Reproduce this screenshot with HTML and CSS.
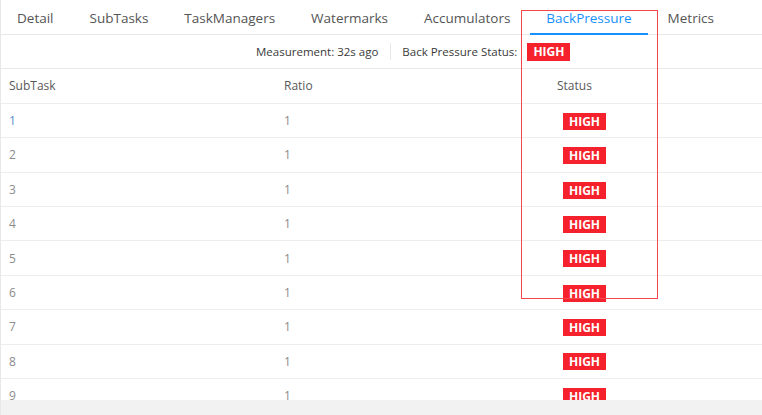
FILE: index.html
```html
<!DOCTYPE html>
<html>
<head>
<meta charset="utf-8">
<link rel="stylesheet" href="styles.css">
</head>
<body>
<div class="page">
  <div class="tabs">
    <div class="tab">Detail</div>
    <div class="tab">SubTasks</div>
    <div class="tab">TaskManagers</div>
    <div class="tab">Watermarks</div>
    <div class="tab">Accumulators</div>
    <div class="tab active">BackPressure</div>
    <div class="tab">Metrics</div>
  </div>
  <div class="summary">
    <span class="label">Measurement: 32s ago</span>
    <span class="divider"></span>
    <span class="label">Back Pressure Status:</span>
    <span class="badge big">HIGH</span>
  </div>
  <div class="scroll">
    <table class="grid">
      <colgroup><col class="c1"><col class="c2"><col class="c3"></colgroup>
      <thead>
        <tr><th>SubTask</th><th>Ratio</th><th>Status</th></tr>
      </thead>
      <tbody>
        <tr><td class="link">1</td><td>1</td><td><span class="badge">HIGH</span></td></tr>
        <tr><td>2</td><td>1</td><td><span class="badge">HIGH</span></td></tr>
        <tr><td>3</td><td>1</td><td><span class="badge">HIGH</span></td></tr>
        <tr><td>4</td><td>1</td><td><span class="badge">HIGH</span></td></tr>
        <tr><td>5</td><td>1</td><td><span class="badge">HIGH</span></td></tr>
        <tr><td>6</td><td>1</td><td><span class="badge">HIGH</span></td></tr>
        <tr><td>7</td><td>1</td><td><span class="badge">HIGH</span></td></tr>
        <tr><td>8</td><td>1</td><td><span class="badge">HIGH</span></td></tr>
        <tr><td>9</td><td>1</td><td><span class="badge">HIGH</span></td></tr>
      </tbody>
    </table>
  </div>
  <div class="footer"></div>
  <div class="highlight"></div>
</div>
</body>
</html>
```
FILE: styles.css
```css
* { box-sizing: border-box; }
html, body { margin: 0; padding: 0; background: #fff; }
body { font-family: "Open Sans", "Noto Sans", sans-serif; }
.page {
  position: relative;
  width: 762px;
  height: 415px;
  border-left: 1px solid #e8e8e8;
  overflow: hidden;
}
.tabs {
  display: flex;
  height: 35px;
  border-bottom: 1px solid #e8e8e8;
}
.tab {
  padding: 1px 16px 0;
  margin-right: 4px;
  font-size: 13.5px;
  line-height: 34px;
  color: #545454;
  position: relative;
  white-space: nowrap;
}
.tab.active { color: #1890ff; }
.tab.active::after {
  content: "";
  position: absolute;
  left: 0; right: 0; bottom: -1px;
  height: 2px;
  background: #1890ff;
}
.summary {
  display: flex;
  align-items: center;
  height: 34px;
  padding-left: 255px;
  border-bottom: 1px solid #e8e8e8;
  font-size: 11.5px;
  color: #3a3a3a;
}
.divider {
  width: 1px;
  height: 17px;
  background: #e8e8e8;
  margin: 0 11px 0 12px;
}
.summary .badge { margin-left: 10px; }
.scroll {
  height: 331px;
  overflow: hidden;
}
.grid {
  width: 761px;
  border-collapse: collapse;
  table-layout: fixed;
  font-size: 12px;
}
.c1 { width: 275px; }
.c2 { width: 273px; }
.grid th, .grid td {
  height: 34.4px;
  padding: 0 8px;
  text-align: left;
  border-bottom: 1px solid #ededed;
  font-weight: normal;
}
.grid th { color: #595959; }
.grid td { color: #8c8c8c; }
.grid td.link { color: #5b8ec7; }
.grid td .badge { margin-left: 6px; }
.badge {
  display: inline-block;
  background: #f5222d;
  color: #fff;
  font-weight: 700;
  font-size: 12px;
  line-height: 17px;
  height: 17px;
  padding: 0 6px;
  vertical-align: middle;
}
.badge.big { height: 18px; line-height: 18px; }
.footer {
  height: 15px;
  background: #f2f2f2;
}
.highlight {
  position: absolute;
  left: 520px;
  top: 10px;
  width: 137px;
  height: 289px;
  border: 1px solid #f5474c;
  pointer-events: none;
}
```
